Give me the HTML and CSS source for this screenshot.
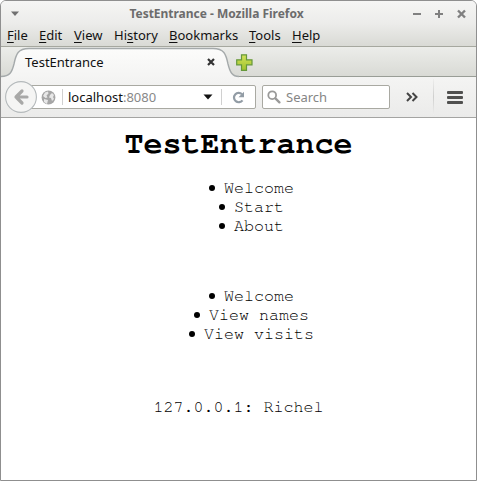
FILE: index.html
```html
<!DOCTYPE html>
<html lang="en">
<head>
<meta charset="utf-8">
<title>TestEntrance</title>
<link rel="stylesheet" href="styles.css">
</head>
<body>
<div class="window">
  <header class="head">
    <div class="titlebar">
      <svg class="window-menu" width="10" height="6" viewBox="0 0 10 6"><path d="M1 .5h8L5 5z" fill="#707070"/></svg>
      <span class="title">TestEntrance - Mozilla Firefox</span>
      <svg class="controls" width="54" height="10" viewBox="0 0 54 10" fill="none" stroke="#808080" stroke-width="2"><path d="M0 5h8M22 5h8M26 1v8"/><path d="M45 1.5l7 7M52 1.5l-7 7" stroke-width="2.4"/></svg>
    </div>
    <nav class="menu">
      <span class="m-file"><u>F</u>ile</span><span class="m-edit"><u>E</u>dit</span><span class="m-view"><u>V</u>iew</span><span class="m-history">Hi<u>s</u>tory</span><span class="m-bookmarks"><u>B</u>ookmarks</span><span class="m-tools"><u>T</u>ools</span><span class="m-help"><u>H</u>elp</span>
    </nav>
  </header>
  <div class="tabs">
    <div class="tab">
      <svg class="tab-shape" width="238" height="31" viewBox="0 0 238 31">
        <defs><linearGradient id="tab" x1="0" y1="0" x2="0" y2="1"><stop offset="0" stop-color="#fcfcfb"/><stop offset="1" stop-color="#f4f4f3"/></linearGradient></defs>
        <path d="M0 29.500C9 29.500 11 25 13 17C15 7 17 1.500 28 1.500H212C223 1.500 225 7 227 17C229 25 231 29.500 238 29.500V31H0z" fill="url(#tab)"/>
        <path d="M0 29.500C9 29.500 11 25 13 17C15 7 17 1.500 28 1.500H212C223 1.500 225 7 227 17C229 25 231 29.500 238 29.500" fill="none" stroke="#a5aaab" stroke-width="1.400"/>
      </svg>
      <span class="tab-title">TestEntrance</span>
      <svg class="tab-close" width="8" height="8" viewBox="0 0 8 8"><path d="M1 1l6 6M7 1L1 7" stroke="#333" stroke-width="2.200"/></svg>
    </div>
    <svg class="new-tab" width="17" height="17" viewBox="0 0 17 17">
      <defs><linearGradient id="plus" x1="0" y1="0" x2="0" y2="1"><stop offset="0" stop-color="#d3e25c"/><stop offset="1" stop-color="#9fc22c"/></linearGradient></defs>
      <path d="M5.500.800h5v5h5.500v5h-5.500v5.500h-5v-5.500H.700v-5h4.800z" fill="url(#plus)" stroke="#65983a" stroke-width="1.200"/>
    </svg>
  </div>
  <div class="toolbar">
    <svg class="back" width="32" height="32" viewBox="0 0 32 32"><circle cx="16" cy="16" r="15.400" fill="#f5f5f4" stroke="#b4b9bb" stroke-width="1.100"/><path d="M22 16H11M17 10l-6 6 6 6" fill="none" stroke="#a8a8a7" stroke-width="3.200" stroke-linecap="round" stroke-linejoin="round"/></svg>
    <div class="address">
      <svg class="globe" width="15" height="15" viewBox="0 0 15 15"><circle cx="7.500" cy="7.500" r="6.900" fill="#a6a6a6"/><path d="M2 6l2-3.500 3-1 .5 2-2 2 1 2-2 .5zM9 5l2-2 2 2-1 2 1 2-2 2-1-3-2-.5zM3 9l4 1-1 4-3-2z" fill="#e8e8e8"/></svg>
      <i class="divider"></i>
      <span class="host">localhost<span class="port">:8080</span></span>
      <svg class="dropdown" width="10" height="6" viewBox="0 0 10 6"><path d="M.5.500h9L5 5.500z" fill="#111"/></svg>
      <i class="divider"></i>
      <svg class="reload" width="13" height="13" viewBox="0 0 13 13"><path d="M10 3.200A4.700 4.700 0 1 0 10.500 9.300" fill="none" stroke="#929ca5" stroke-width="2.200"/><path d="M12 .700v5.600H6.500z" fill="#929ca5"/></svg>
    </div>
    <div class="search">
      <svg width="14" height="14" viewBox="0 0 14 14" fill="none" stroke="#9a9a99"><circle cx="5.200" cy="5.200" r="3.900" stroke-width="1.800"/><path d="M8.400 8.400l4 4" stroke-width="2.300" stroke-linecap="round"/></svg>
      <span>Search</span>
    </div>
    <svg class="overflow" width="12" height="10" viewBox="0 0 12 10"><path d="M1 1l4 4-4 4M6.500 1l4 4-4 4" fill="none" stroke="#444" stroke-width="2"/></svg>
    <i class="tool-divider"></i>
    <svg class="burger" width="16" height="13" viewBox="0 0 16 13" fill="#50504f"><rect width="16" height="3" rx="1"/><rect y="5" width="16" height="3" rx="1"/><rect y="10" width="16" height="3" rx="1"/></svg>
  </div>
  <main class="page">
    <h1>TestEntrance</h1>
    <ul><li>Welcome</li><li>Start</li><li>About</li></ul>
    <ul><li>Welcome</li><li>View names</li><li>View visits</li></ul>
    <p>127.0.0.1: Richel</p>
  </main>
</div>
</body>
</html>
```
FILE: styles.css
```css
* { box-sizing: border-box; }
body { margin: 0; background: #fff; font: 13px/18px "Noto Sans", sans-serif; color: #111; }
svg { display: block; flex: none; }
.window { height: 481px; border: 1px solid #8f8f8f; border-radius: 6px 6px 0 0; overflow: hidden; background: #fff; }
.head { height: 46px; background: linear-gradient(#f5f5f4, #ececea 50%, #d9dad5); border-bottom: 1px solid #a6a89f; }
.titlebar { height: 25px; display: flex; align-items: center; padding: 0 9px; }
.window-menu { margin-top: 1px; }
.title { flex: 1; text-align: center; font-size: 12px; font-weight: 700; color: #6c6c6c; white-space: nowrap; letter-spacing: -.02px; }
.menu { display: flex; height: 20px; padding-left: 6px; white-space: nowrap; }
.menu u { text-underline-offset: 2px; text-decoration-thickness: 1px; text-decoration-skip-ink: none; }
.m-file { width: 32px; }
.m-edit { width: 35px; }
.m-view { width: 40px; }
.m-history { width: 55px; }
.m-bookmarks { width: 80px; }
.m-tools { width: 43px; }
.tabs { height: 30px; display: flex; background: linear-gradient(#ecedea, #d9dad5); border-bottom: 1px solid #999d96; }
.tab { position: relative; width: 238px; height: 30px; display: flex; align-items: center; padding: 0 0 0 24px; }
.tab-shape { position: absolute; left: 0; top: 0; }
.tab-title { position: relative; flex: 1; }
.tab-close { position: relative; margin-right: 24px; }
.new-tab { margin: 7px 0 0 -3px; position: relative; }
.toolbar { height: 41px; display: flex; align-items: center; padding-left: 4px; background: linear-gradient(#f4f4f3, #ebebea); border-bottom: 1px solid #a4a4a2; }
.back { position: relative; }
.address { width: 235px; height: 24px; margin-left: -16px; border: 1px solid #a9a9a2; border-radius: 2px; background: #fff; display: flex; align-items: center; padding-left: 19px; }
.divider { width: 1px; height: 16px; background: #d0d0d0; flex: none; }
.globe { margin-right: 6px; }
.host { margin-left: 5px; flex: 1; }
.port { color: #888; }
.dropdown { margin-right: 8px; }
.reload { margin: 0 10px; }
.search { width: 128px; height: 24px; margin-left: 6px; border: 1px solid #a9a9a2; border-radius: 2px; background: #fff; display: flex; align-items: center; gap: 5px; padding-left: 4px; color: #858585; }
.overflow { margin-left: 16px; }
.tool-divider { width: 1px; height: 36px; margin-left: 15px; background: linear-gradient(#eeeeed, #cfcfce 50%, #eeeeed); }
.burger { margin-left: 13px; }
.page { font: 16.67px/19px "Courier 10 Pitch", "Nimbus Mono PS", "FreeMono", "Liberation Mono", monospace; color: #000; text-align: center; padding: 8px; }
.page h1 { margin: 0 0 17px; font-size: 31.7px; line-height: 36px; }
.page ul { margin: 0 0 51px; padding: 0 0 0 26px; list-style: none; }
.page li::before { content: ""; display: inline-block; width: 6px; height: 6px; margin-right: 9px; border-radius: 50%; background: #000; vertical-align: 2px; }
.page p { margin: 54px 0 0; }
```
